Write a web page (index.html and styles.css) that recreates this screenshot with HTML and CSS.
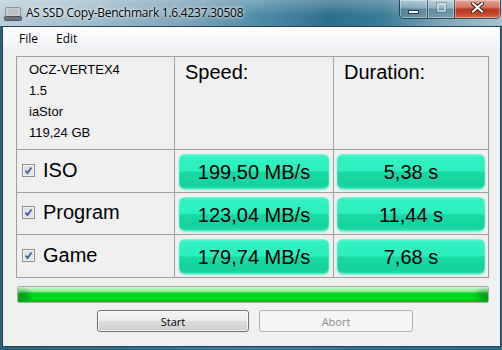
FILE: index.html
```html
<!DOCTYPE html>
<html lang="en">
<head>
    <meta charset="UTF-8">
    <meta name="viewport" content="width=device-width, initial-scale=1.0">
    <title>AS SSD Copy-Benchmark</title>
    <link rel="stylesheet" href="styles.css">
</head>
<body>
    <div class="window">
        <div class="titlebar">
            <svg class="app-icon" width="18" height="14" viewBox="0 0 18 14">
                <rect x="1.5" y="0.5" width="15" height="9" rx="1.5" fill="#c9cdd2" stroke="#8a9096"/>
                <path d="M4 3h10M4 5h10M4 7h10" stroke="#a9afb5" stroke-width="1"/>
                <rect x="0.5" y="9.5" width="17" height="4" rx="1" fill="#6c7278" stroke="#4b5056"/>
                <rect x="13" y="11" width="2" height="1.5" fill="#3a7cff"/>
            </svg>
            <span class="title">AS SSD Copy-Benchmark 1.6.4237.30508</span>
            <div class="caption-buttons">
                <span class="cap-btn cap-min"><span class="glyph-min"></span></span>
                <span class="cap-btn cap-max"><span class="glyph-max"></span></span>
                <span class="cap-btn cap-close">
                    <svg width="13" height="11" viewBox="0 0 13 11">
                        <path d="M2 1.5L11 9.5M11 1.5L2 9.5" stroke="#3b2420" stroke-width="4" stroke-linecap="square"/>
                        <path d="M2 1.5L11 9.5M11 1.5L2 9.5" stroke="#ffffff" stroke-width="2" stroke-linecap="square"/>
                    </svg>
                </span>
            </div>
        </div>

        <div class="client">
            <div class="menubar">
                <span class="menu-item">File</span>
                <span class="menu-item">Edit</span>
            </div>

            <div class="content">
                <div class="results">
                    <div class="cell drive-info">
                        <div>OCZ-VERTEX4</div>
                        <div>1.5</div>
                        <div>iaStor</div>
                        <div>119,24 GB</div>
                    </div>
                    <div class="cell col-head">Speed:</div>
                    <div class="cell col-head">Duration:</div>

                    <div class="cell test-name">
                        <svg class="check" width="13" height="13" viewBox="0 0 13 13"><rect x="0.5" y="0.5" width="12" height="12" fill="#f4f4f4" stroke="#8e8f8f"/><rect x="2" y="2" width="9" height="9" fill="#dfe3e8"/><path d="M3.5 6.5L5.5 9L9.5 3.5" fill="none" stroke="#3d57a0" stroke-width="1.7"/></svg>
                        <span>ISO</span>
                    </div>
                    <div class="cell value speed"><div class="pill">199,50 MB/s</div></div>
                    <div class="cell value time"><div class="pill">5,38 s</div></div>

                    <div class="cell test-name">
                        <svg class="check" width="13" height="13" viewBox="0 0 13 13"><rect x="0.5" y="0.5" width="12" height="12" fill="#f4f4f4" stroke="#8e8f8f"/><rect x="2" y="2" width="9" height="9" fill="#dfe3e8"/><path d="M3.5 6.5L5.5 9L9.5 3.5" fill="none" stroke="#3d57a0" stroke-width="1.7"/></svg>
                        <span>Program</span>
                    </div>
                    <div class="cell value speed"><div class="pill">123,04 MB/s</div></div>
                    <div class="cell value time"><div class="pill">11,44 s</div></div>

                    <div class="cell test-name">
                        <svg class="check" width="13" height="13" viewBox="0 0 13 13"><rect x="0.5" y="0.5" width="12" height="12" fill="#f4f4f4" stroke="#8e8f8f"/><rect x="2" y="2" width="9" height="9" fill="#dfe3e8"/><path d="M3.5 6.5L5.5 9L9.5 3.5" fill="none" stroke="#3d57a0" stroke-width="1.7"/></svg>
                        <span>Game</span>
                    </div>
                    <div class="cell value speed"><div class="pill">179,74 MB/s</div></div>
                    <div class="cell value time"><div class="pill">7,68 s</div></div>
                </div>

                <div class="progress"><div class="progress-fill"></div></div>

                <div class="buttons">
                    <button class="btn">Start</button>
                    <button class="btn" disabled>Abort</button>
                </div>
            </div>
        </div>
    </div>
</body>
</html>
```

FILE: styles.css
```css
:root {
    --frame: #326f8b;
    --face: #f0f0f0;
    --grid-line: #a0a0a0;
    --ui-font: "Open Sans", "Noto Sans", sans-serif;
    --big-font: "Liberation Sans", Arial, sans-serif;
}

* {
    margin: 0;
    padding: 0;
    box-sizing: border-box;
}

body {
    width: 502px;
    height: 350px;
    overflow: hidden;
    background: var(--frame);
}

.window {
    width: 502px;
    height: 350px;
    display: flex;
    flex-direction: column;
    padding: 0 1px 3px 2px;
    background: linear-gradient(90deg, #2c5f78 0%, #3b7a95 50%, #2c6580 100%);
}

/* title bar (aero glass) */
.titlebar {
    height: 26px;
    margin: 0 -1px 0 -2px;
    display: flex;
    align-items: flex-start;
    background:
        linear-gradient(180deg, rgba(255, 255, 255, 0.25) 0%, rgba(255, 255, 255, 0) 60%),
        linear-gradient(90deg, #b9cfdc 0%, #a9c3d2 12%, #7fa6bb 35%, #4f8aa5 52%, #2f6f8c 66%, #3a7a95 76%, #7ea7ba 88%, #a7c2cf 100%);
}

.app-icon {
    margin: 7px 0 0 4px;
    flex-shrink: 0;
}

.title {
    margin: 4px 0 0 4px;
    font-family: var(--ui-font);
    font-size: 12px;
    letter-spacing: -0.25px;
    color: #000;
    text-shadow: 0 0 6px rgba(255, 255, 255, 0.9), 0 0 3px rgba(255, 255, 255, 0.9);
    white-space: nowrap;
}

.caption-buttons {
    margin-left: auto;
    margin-right: 1px;
    display: flex;
    height: 19px;
    border: 1px solid rgba(20, 40, 55, 0.75);
    border-top: none;
    border-radius: 0 0 5px 5px;
    overflow: hidden;
}

.cap-btn {
    display: flex;
    align-items: center;
    justify-content: center;
    height: 100%;
    border-left: 1px solid rgba(20, 40, 55, 0.6);
    box-shadow: inset 0 0 0 1px rgba(255, 255, 255, 0.35);
}

.cap-btn:first-child {
    border-left: none;
}

.cap-min,
.cap-max {
    width: 27px;
    background: linear-gradient(180deg, rgba(210, 228, 238, 0.55) 0%, rgba(150, 185, 205, 0.45) 45%, rgba(70, 110, 135, 0.5) 50%, rgba(110, 150, 170, 0.5) 100%);
}

.cap-min {
    align-items: flex-end;
    padding-bottom: 4px;
}

.glyph-min {
    width: 11px;
    height: 4px;
    background: #fff;
    border: 1px solid #2a3a46;
}

.glyph-max {
    width: 9px;
    height: 9px;
    margin-top: -4px;
    border: 2px solid rgba(235, 240, 245, 0.55);
    outline: 1px solid rgba(60, 80, 95, 0.35);
}

.cap-close {
    width: 46px;
    background: linear-gradient(180deg, #e4a89a 0%, #d27563 40%, #bb3a22 52%, #c24429 75%, #dd6c45 100%);
}

.cap-close svg {
    margin-top: -3px;
}

/* client area */
.client {
    flex: 1;
    display: flex;
    flex-direction: column;
    background: var(--face);
    border: 1px solid #23465a;
}

.menubar {
    height: 23px;
    display: flex;
    align-items: center;
    padding-left: 7px;
    background: linear-gradient(180deg, #fdfdfe 0%, #f6f7f9 60%, #eef0f3 100%);
    font-family: var(--ui-font);
    font-size: 12px;
    color: #000;
}

.menu-item {
    padding: 0 9px;
}

.content {
    flex: 1;
    display: flex;
    flex-direction: column;
}

.results {
    margin: 6px 0 0 13px;
    width: fit-content;
    display: grid;
    grid-template-columns: 157px 158px 154px;
    grid-template-rows: 92px 42px 41px 42px;
    gap: 1px;
    background: var(--grid-line);
    border: 1px solid var(--grid-line);
}

.cell {
    background: var(--face);
    font-family: var(--big-font);
    color: #000;
}

.drive-info {
    padding: 2px 0 0 12px;
    font-size: 13px;
    line-height: 21px;
}

.col-head {
    padding: 3px 0 0 10px;
    font-size: 20px;
    line-height: 24px;
}

.test-name {
    display: flex;
    align-items: center;
    padding: 0 0 2px 5px;
    font-size: 20px;
}

.check {
    margin-right: 8px;
    flex-shrink: 0;
}

.value {
    display: flex;
}

.speed {
    padding: 4px 4px 3px 4px;
}

.time {
    padding: 4px 3px 3px 3px;
}

.pill {
    flex: 1;
    display: flex;
    align-items: center;
    justify-content: center;
    padding-top: 2px;
    border-radius: 6px;
    font-size: 20px;
    background: linear-gradient(180deg, #6ff5d6 0%, #34f1c3 8%, #2aefbe 48%, #18d8a4 52%, #15d29e 90%, #2fe3b5 100%);
    box-shadow: 0 1px 2px rgba(70, 235, 200, 0.7), inset 0 0 0 1px rgba(120, 250, 220, 0.35);
}

/* progress */
.progress {
    margin: 8px 11px 0 14px;
    height: 17px;
    border: 1px solid #a9acaf;
    border-radius: 2px;
    background: #e6e6e6;
}

.progress-fill {
    height: 100%;
    background:
        radial-gradient(ellipse 12px 10px at 4px 60%, rgba(0, 80, 10, 0.45), rgba(0, 80, 10, 0) 100%),
        radial-gradient(ellipse 12px 10px at calc(100% - 3px) 60%, rgba(0, 80, 10, 0.45), rgba(0, 80, 10, 0) 100%),
        linear-gradient(180deg, #d4f8d6 0%, #9eeea6 22%, #7ee88a 32%, #04d724 40%, #00d21e 75%, #00c31a 100%);
}

/* buttons */
.buttons {
    margin: 7px 0 0 94px;
    display: flex;
    gap: 10px;
}

.btn {
    width: 152px;
    height: 22px;
    border: 1px solid #707070;
    border-radius: 3px;
    font-family: var(--ui-font);
    font-size: 11px;
    color: #000;
    background: linear-gradient(180deg, #f2f2f2 0%, #ebebeb 48%, #dddddd 52%, #cfcfcf 100%);
    box-shadow: inset 0 0 0 1px rgba(255, 255, 255, 0.7);
}

.btn + .btn {
    width: 154px;
}

.btn:disabled {
    border-color: #adb2b5;
    background: #f4f4f4;
    color: #8d8d8d;
    box-shadow: none;
}
```
